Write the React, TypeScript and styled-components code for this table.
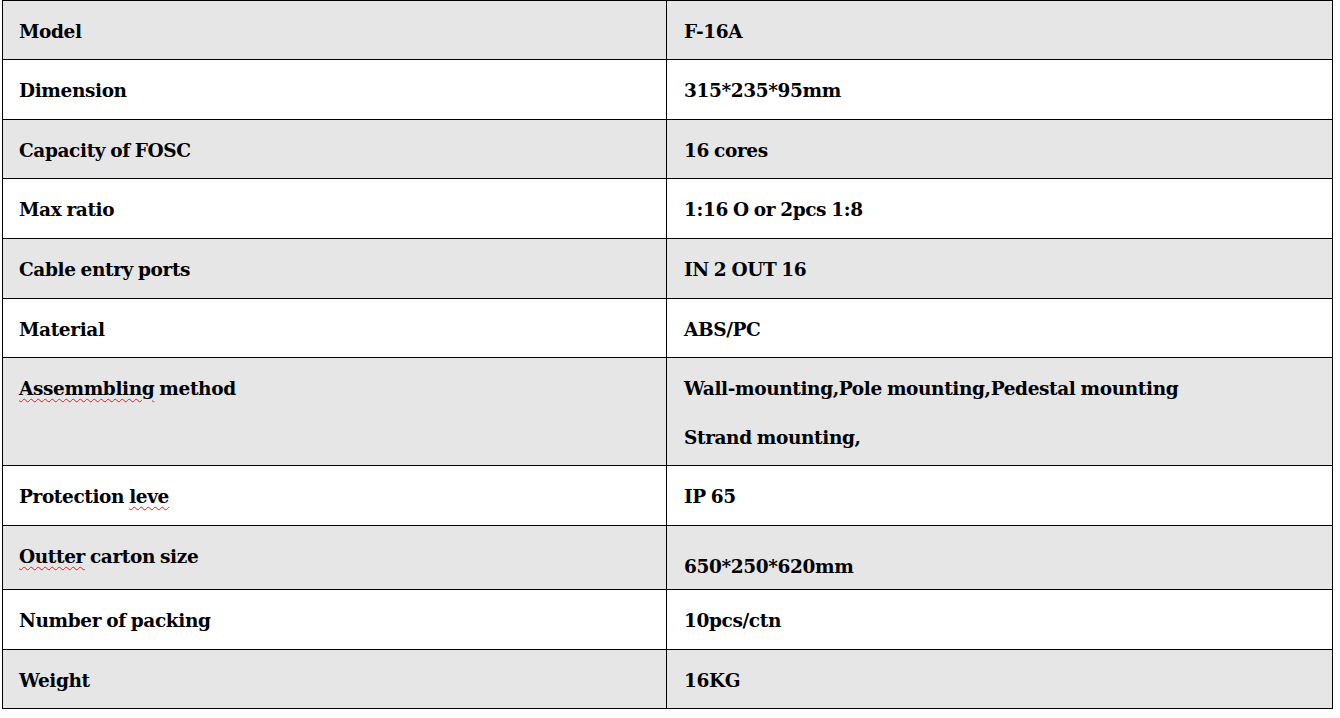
import React from "react";
import styled, { createGlobalStyle } from "styled-components";

const Global = createGlobalStyle`
  html, body { margin: 0; padding: 0; background: #ffffff; }
  body { font-family: "DejaVu Serif", "Liberation Serif", serif; }
`;

const Page = styled.div`
  padding: 0 0 0 2px;
`;

const Table = styled.div<{ $rows: string }>`
  display: grid;
  width: 1331px;
  grid-template-columns: 664px 666px;
  grid-template-rows: ${(p) => p.$rows};
  border-top: 1px solid #000;
  border-left: 1px solid #000;
  box-sizing: border-box;
`;

const Cell = styled.div<{ $gray: boolean; $shift?: number; $indent: number }>`
  box-sizing: border-box;
  border-right: 1px solid #000;
  border-bottom: 1px solid #000;
  background: ${(p) => (p.$gray ? "#e6e6e6" : "#ffffff")};
  padding: ${(p) => 6 + (p.$shift || 0)}px 12px 0 ${(p) => p.$indent}px;
  font-family: "DejaVu Serif", "Liberation Serif", serif;
  font-weight: 700;
  font-size: 18.5px;
  line-height: 49px;
  color: #000;
  letter-spacing: -0.38px;
  word-spacing: -1px;
  overflow: hidden;
  white-space: nowrap;
`;

const Misspelt = styled.span`
  text-decoration-line: underline;
  text-decoration-style: wavy;
  text-decoration-color: #e0201a;
  text-decoration-thickness: 1px;
  text-underline-offset: 3px;
`;

type Row = { label: React.ReactNode; value: React.ReactNode; h: number; shift?: number };

const rows: Row[] = [
  { label: "Model", value: "F-16A", h: 59 },
  { label: "Dimension", value: "315*235*95mm", h: 60 },
  { label: "Capacity of FOSC", value: "16 cores", h: 59 },
  { label: "Max ratio", value: "1:16 O or 2pcs 1:8", h: 60 },
  { label: "Cable entry ports", value: "IN 2 OUT 16", h: 60 },
  { label: "Material", value: "ABS/PC", h: 59 },
  {
    label: (
      <>
        <Misspelt>Assemmbling</Misspelt> method
      </>
    ),
    value: (
      <>
        Wall-mounting,Pole mounting,Pedestal mounting
        <br />
        Strand mounting,
      </>
    ),
    h: 108,
  },
  {
    label: (
      <>
        Protection <Misspelt>leve</Misspelt>
      </>
    ),
    value: "IP 65",
    h: 60,
  },
  {
    label: (
      <>
        <Misspelt>Outter</Misspelt> carton size
      </>
    ),
    value: "650*250*620mm",
    h: 64,
    shift: 10,
  },
  { label: "Number of packing", value: "10pcs/ctn", h: 60 },
  { label: "Weight", value: "16KG", h: 59 },
];

export default function App() {
  return (
    <>
      <Global />
      <Page>
        <Table $rows={rows.map((r) => `${r.h}px`).join(" ")}>
          {rows.map((r, i) => (
            <React.Fragment key={i}>
              <Cell $gray={i % 2 === 0} $indent={16}>
                {r.label}
              </Cell>
              <Cell $gray={i % 2 === 0} $shift={r.shift} $indent={17}>
                {r.value}
              </Cell>
            </React.Fragment>
          ))}
        </Table>
      </Page>
    </>
  );
}
